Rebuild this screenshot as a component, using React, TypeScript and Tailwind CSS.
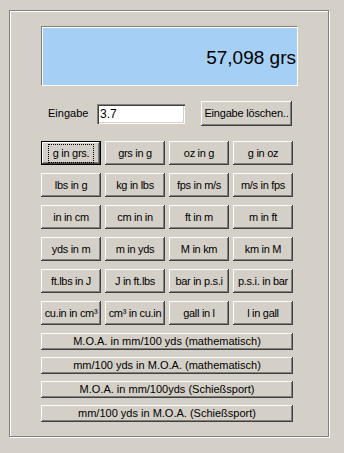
import React from "react";

const font = { fontFamily: '"Liberation Sans", Arial, sans-serif' };

const raised =
  "bg-[#d4d0c8] shadow-[inset_-1px_-1px_0_#404040,inset_1px_1px_0_#ffffff,inset_-2px_-2px_0_#808080]";

function Btn({ label, def }: { label: string; def?: boolean }) {
  if (def) {
    return (
      <div className="relative h-[24px] w-[60px] border border-black bg-[#d4d0c8]">
        <div className="flex h-full w-full items-center justify-center shadow-[inset_-1px_-1px_0_#404040,inset_1px_1px_0_#ffffff,inset_-2px_-2px_0_#808080] text-[11px] leading-none tracking-[-0.3px] text-black">
          <span className="border border-dotted border-black px-[4px] py-[3px]">{label}</span>
        </div>
      </div>
    );
  }
  return (
    <div
      className={`flex h-[24px] w-[60px] items-center justify-center whitespace-nowrap text-[11px] leading-none tracking-[-0.3px] text-black ${raised}`}
    >
      {label}
    </div>
  );
}

function Wide({ label }: { label: string }) {
  return (
    <div
      className={`flex h-[17px] w-[252px] items-center justify-center whitespace-nowrap text-[11px] leading-none text-black ${raised}`}
    >
      {label}
    </div>
  );
}

const grid = [
  "g in grs.", "grs in g", "oz in g", "g in oz",
  "lbs in g", "kg in lbs", "fps in m/s", "m/s in fps",
  "in in cm", "cm in in", "ft in m", "m in ft",
  "yds in m", "m in yds", "M in km", "km in M",
  "ft.lbs in J", "J in ft.lbs", "bar in p.s.i", "p.s.i. in bar",
  "cu.in in cm³", "cm³ in cu.in", "gall in l", "l in gall",
];

const wides = [
  "M.O.A. in mm/100 yds (mathematisch)",
  "mm/100 yds in M.O.A. (mathematisch)",
  "M.O.A. in mm/100yds (Schießsport)",
  "mm/100 yds in M.O.A. (Schießsport)",
];

export default function App() {
  return (
    <div className="h-[453px] w-[344px] bg-[#d4d0c8] pl-[9px] pt-[10px]" style={font}>
      <div className="h-[427px] w-[320px] border border-[#808080] pl-[31px] pt-[15px] shadow-[inset_1px_1px_0_#ffffff,1px_1px_0_#ffffff]">
        <div className="flex h-[60px] w-[257px] items-center justify-end border border-b-white border-l-[#808080] border-r-white border-t-[#808080] bg-[#a6cff5] pr-[1px] pt-[3px] shadow-[inset_1px_1px_0_#ffffff]">
          <span className="text-[19px] leading-none text-black">57,098 grs</span>
        </div>
        <div className="mt-[15px] flex h-[25px] items-center">
          <span className="ml-[7px] w-[49px] text-[11px] text-black">Eingabe</span>
          <div className="flex h-[20px] w-[88px] items-center bg-white pl-[3px] text-[12px] text-black shadow-[inset_1px_1px_0_#808080,inset_2px_2px_0_#404040,inset_-1px_-1px_0_#ffffff,inset_-2px_-2px_0_#d4d0c8]">
            3.7
          </div>
          <div
            className={`ml-[16px] flex h-[25px] w-[91px] items-center justify-center whitespace-nowrap text-[11px] leading-none tracking-[-0.2px] text-black ${raised}`}
          >
            Eingabe löschen..
          </div>
        </div>
        <div className="mt-[15px] grid grid-cols-[repeat(4,60px)] gap-x-[4px] gap-y-[8px]">
          {grid.map((g, i) => (
            <Btn key={g} label={g} def={i === 0} />
          ))}
        </div>
        <div className="mt-[8px] flex flex-col gap-[7px]">
          {wides.map((w) => (
            <Wide key={w} label={w} />
          ))}
        </div>
      </div>
    </div>
  );
}
